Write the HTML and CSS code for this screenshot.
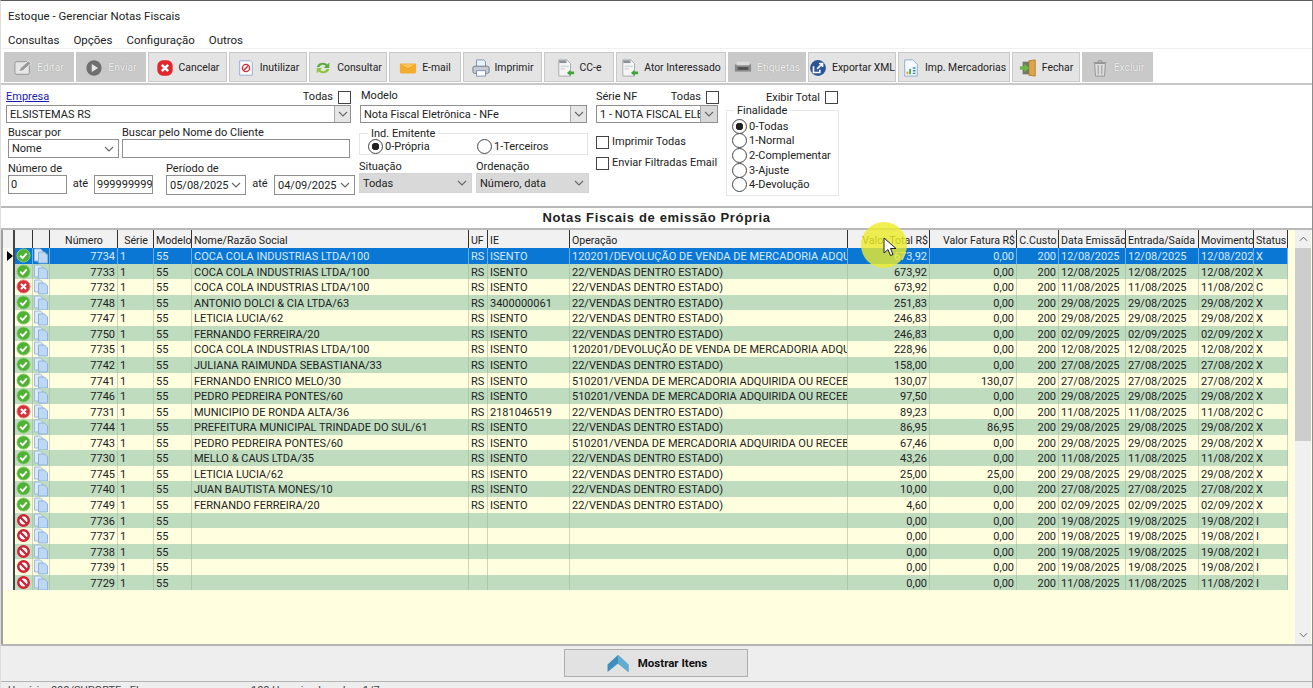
FILE: index.html
```html
<!DOCTYPE html>
<html lang="pt-BR">
<head>
<meta charset="utf-8">
<title>Estoque - Gerenciar Notas Fiscais</title>
<link rel="stylesheet" href="styles.css">
</head>
<body>
<svg class="sprite" aria-hidden="true">
<symbol id="ok" viewBox="0 0 16 16"><circle cx="8" cy="8" r="7" fill="#4fb233" stroke="#8fcf7c"/><path d="M4.5 8.2l2.5 2.5 4.5-5" fill="none" stroke="#fff" stroke-width="2"/></symbol>
<symbol id="err" viewBox="0 0 16 16"><circle cx="8" cy="8" r="7" fill="#d8303a" stroke="#e98a8a"/><path d="M5.3 5.3l5.4 5.4M10.7 5.3l-5.4 5.4" stroke="#fff" stroke-width="2.2"/></symbol>
<symbol id="ban" viewBox="0 0 16 16"><circle cx="8" cy="8" r="5.6" fill="#fff" stroke="#cf2233" stroke-width="2.6"/><path d="M4 4l8 8" stroke="#cf2233" stroke-width="2.4"/></symbol>
<symbol id="doc" viewBox="0 0 16 16"><path d="M1.5 1h6l2 2v10h-8z" fill="#dce9f7" stroke="#9dbbdc"/><path d="M5.500 4h6l3 3v8h-9z" fill="#bcd8f4" stroke="#8fb2da"/></symbol>
<symbol id="file" viewBox="0 0 20 20"><path d="M2 1h9l4 4v14H2z" fill="#f4f4f4" stroke="#a4a8ae"/><path d="M2.500 1.500h8v3h-8z" fill="#8d9196"/><path d="M4 8h9M4 11h5" stroke="#c0c4c9"/><path d="M11 15.500l4-3.500v2h4v3h-4v2z" fill="#3fa33a"/></symbol>
<symbol id="i-edit" viewBox="0 0 20 20"><rect x="1" y="3" width="16" height="14" rx="2" fill="#e6e6e6" stroke="#8e8e8e"/><path d="M5 14l2-4 9-8 3 3-9 8z" fill="#9a9a9a" stroke="#f2f2f2"/></symbol>
<symbol id="i-send" viewBox="0 0 20 20"><circle cx="10" cy="10" r="8.500" fill="#6f6f6f"/><path d="M7.500 5.500l7 4.500-7 4.500z" fill="#e6e6e6"/></symbol>
<symbol id="i-cancel" viewBox="0 0 20 20"><rect x="1.500" y="1.500" width="17" height="17" rx="6" fill="#e2262c"/><path d="M6.500 6.500l7 7M13.500 6.500l-7 7" stroke="#fff" stroke-width="2.800"/></symbol>
<symbol id="i-inut" viewBox="0 0 20 20"><path d="M3 2h12l2 2v14H3z" fill="#fbfbfb" stroke="#8ea9cf"/><circle cx="10" cy="10" r="4" fill="none" stroke="#c9303a" stroke-width="1.500"/><path d="M7.500 12.500l5-5" stroke="#c9303a" stroke-width="1.500"/></symbol>
<symbol id="i-cons" viewBox="0 0 20 20"><path d="M3 9a7 6 0 0 1 12-3l2-2v6h-6l2-2a4 4 0 0 0-7 1z" fill="#59ad3a"/><path d="M17 11a7 6 0 0 1-12 3l-2 2v-6h6l-2 2a4 4 0 0 0 7-1z" fill="#8cc63f"/></symbol>
<symbol id="i-mail" viewBox="0 0 20 20"><rect x="1" y="5" width="18" height="11" rx="1.500" fill="#f5ac2f"/><path d="M1.500 6l8.500 5 8.500-5" fill="#ffc860" stroke="#eb9c20"/></symbol>
<symbol id="i-print" viewBox="0 0 20 20"><path d="M5 1h8l2 2v6H5z" fill="#e9f1fb" stroke="#7a8fb0"/><rect x="1" y="8" width="18" height="8" rx="2" fill="#c6cbd3" stroke="#6d7582"/><rect x="5" y="13" width="10" height="6" fill="#fff" stroke="#7a8fb0"/></symbol>
<symbol id="i-label" viewBox="0 0 20 20"><rect x="1" y="6" width="18" height="8" fill="#8a8a8a"/><rect x="3" y="3" width="14" height="4" fill="#dcdcdc"/><rect x="4" y="9" width="12" height="3" fill="#505050"/></symbol>
<symbol id="i-xml" viewBox="0 0 20 20"><circle cx="10" cy="10" r="8.800" fill="#2b5597"/><path d="M5 8v7h7v-3M9 11l6-6M11 5h4v4" fill="none" stroke="#fff" stroke-width="1.800"/></symbol>
<symbol id="i-merc" viewBox="0 0 20 20"><path d="M3 1h9l5 5v13H3z" fill="#f5f9fd" stroke="#86a9cf"/><rect x="5" y="14" width="2" height="3" fill="#e39a2c"/><rect x="8" y="11" width="2" height="6" fill="#4aa64a"/><path d="M12 10h3M12 13h3M12 16h3" stroke="#3b84c9" stroke-width="1.500"/></symbol>
<symbol id="i-exit" viewBox="0 0 20 20"><path d="M11 2l7-1v18l-7-1z" fill="#e0a347" stroke="#b07c24"/><rect x="4" y="3" width="7" height="14" fill="#6d7a60"/><path d="M1 8h5V5l5 5-5 5v-3H1z" fill="#6cb548"/></symbol>
<symbol id="i-trash" viewBox="0 0 20 20"><path d="M4 5h12l-1 14H5z" fill="#dcdcdc" stroke="#8f8f8f"/><path d="M3 4h14M8 4V2h4v2M8 7v10M12 7v10" fill="none" stroke="#8f8f8f"/></symbol>
<symbol id="chev" viewBox="0 0 10 6"><path d="M1 1l4 4 4-4" fill="none" stroke="#666" stroke-width="1.100"/></symbol>
</svg>
<div class="window">
  <div class="titlebar">Estoque - Gerenciar Notas Fiscais</div>
  <nav class="menu"><span>Consultas</span><span>Opções</span><span>Configuração</span><span>Outros</span></nav>
  <div class="toolbar">
    <button class="tb off w1"><svg class="ic"><use href="#i-edit"/></svg>Editar</button>
    <button class="tb off w2"><svg class="ic"><use href="#i-send"/></svg>Enviar</button>
    <button class="tb w3"><svg class="ic"><use href="#i-cancel"/></svg>Cancelar</button>
    <button class="tb w4"><svg class="ic"><use href="#i-inut"/></svg>Inutilizar</button>
    <button class="tb w5"><svg class="ic"><use href="#i-cons"/></svg>Consultar</button>
    <button class="tb w6"><svg class="ic"><use href="#i-mail"/></svg>E-mail</button>
    <button class="tb w7"><svg class="ic"><use href="#i-print"/></svg>Imprimir</button>
    <button class="tb w8"><svg class="ic"><use href="#file"/></svg>CC-e</button>
    <button class="tb w9"><svg class="ic"><use href="#file"/></svg>Ator Interessado</button>
    <button class="tb off w10"><svg class="ic"><use href="#i-label"/></svg>Etiquetas</button>
    <button class="tb w11"><svg class="ic"><use href="#i-xml"/></svg>Exportar XML</button>
    <button class="tb w12"><svg class="ic"><use href="#i-merc"/></svg>Imp. Mercadorias</button>
    <button class="tb w13"><svg class="ic"><use href="#i-exit"/></svg>Fechar</button>
    <button class="tb off w14"><svg class="ic"><use href="#i-trash"/></svg>Excluir</button>
  </div>
  <form class="filters">
    <div class="col col1">
      <div class="lblrow lr-emp"><a class="link">Empresa</a><span class="todas">Todas<i class="chk"></i></span></div>
      <div class="combo c-emp"><span>ELSISTEMAS RS</span><b class="drop"><svg><use href="#chev"/></svg></b></div>
      <div class="row2 r-busca">
        <div class="fld f-por"><label>Buscar por</label><div class="combo flat"><span>Nome</span><svg class="chev"><use href="#chev"/></svg></div></div>
        <div class="fld f-nome"><label>Buscar pelo Nome do Cliente</label><div class="input"></div></div>
      </div>
      <div class="row2 r-num">
        <div class="fld f-num"><label>Número de</label><div class="input"><span>0</span></div></div>
        <span class="ate a1">até</span>
        <div class="fld f-num2"><div class="input"><span>999999999</span></div></div>
        <div class="fld f-per"><label>Período de</label><div class="combo flat"><span>05/08/2025</span><svg class="chev"><use href="#chev"/></svg></div></div>
        <span class="ate a2">até</span>
        <div class="fld f-per2"><div class="combo flat"><span>04/09/2025</span><svg class="chev"><use href="#chev"/></svg></div></div>
      </div>
    </div>
    <div class="col col2">
      <label class="lbl-mod">Modelo</label>
      <div class="combo c-mod"><span>Nota Fiscal Eletrônica - NFe</span><b class="drop"><svg><use href="#chev"/></svg></b></div>
      <fieldset class="group g-ind"><legend>Ind. Emitente</legend>
        <span class="radio on">0-Própria</span><span class="radio">1-Terceiros</span>
      </fieldset>
      <div class="row2 r-sit">
        <div class="fld f-sit"><label>Situação</label><div class="combo grey"><span>Todas</span><svg class="chev"><use href="#chev"/></svg></div></div>
        <div class="fld f-ord"><label>Ordenação</label><div class="combo grey"><span>Número, data</span><svg class="chev"><use href="#chev"/></svg></div></div>
      </div>
    </div>
    <div class="col col3">
      <div class="lblrow"><span>Série NF</span><span class="todas">Todas<i class="chk"></i></span></div>
      <div class="combo c-serie"><span>1 - NOTA FISCAL ELE</span><b class="drop grey-drop"><svg><use href="#chev"/></svg></b></div>
      <div class="opt o1"><i class="chk"></i>Imprimir Todas</div>
      <div class="opt o2"><i class="chk"></i>Enviar Filtradas Email</div>
    </div>
    <div class="col col4">
      <div class="lbl-total">Exibir Total<i class="chk"></i></div>
      <fieldset class="group g-fin"><legend>Finalidade</legend>
        <span class="radio on">0-Todas</span><span class="radio">1-Normal</span><span class="radio">2-Complementar</span><span class="radio">3-Ajuste</span><span class="radio">4-Devolução</span>
      </fieldset>
    </div>
  </form>
  <h1 class="grid-title">Notas Fiscais de emissão Própria</h1>
  <div class="gridwrap">
    <div class="grid">
      <div class="gr head"><span class="c0"></span><span class="c1"></span><span class="c2"></span><span class="c3 ctr">Número</span><span class="c4 ctr">Série</span><span class="c5 ctr">Modelo</span><span class="c6">Nome/Razão Social</span><span class="c7">UF</span><span class="c8">IE</span><span class="c9">Operação</span><span class="c10 rt">Valor Total R$</span><span class="c11 rt">Valor Fatura R$</span><span class="c12 ctr">C.Custo</span><span class="c13">Data Emissão</span><span class="c14">Entrada/Saída</span><span class="c15">Movimento</span><span class="c16">Status</span></div>
      <div class="gr sel"><span class="c0"><i class="ptr"></i></span><span class="c1"><svg><use href="#ok"/></svg></span><span class="c2"><svg><use href="#doc"/></svg></span><span class="c3 rt">7734</span><span class="c4">1</span><span class="c5">55</span><span class="c6">COCA COLA INDUSTRIAS LTDA/100</span><span class="c7">RS</span><span class="c8">ISENTO</span><span class="c9">120201/DEVOLUÇÃO DE VENDA DE MERCADORIA ADQUIRIDA OU RECEBIDA</span><span class="c10 rt">673,92</span><span class="c11 rt">0,00</span><span class="c12 rt">200</span><span class="c13">12/08/2025</span><span class="c14">12/08/2025</span><span class="c15">12/08/2025</span><span class="c16">X</span></div>
      <div class="gr g"><span class="c0"></span><span class="c1"><svg><use href="#ok"/></svg></span><span class="c2"><svg><use href="#doc"/></svg></span><span class="c3 rt">7733</span><span class="c4">1</span><span class="c5">55</span><span class="c6">COCA COLA INDUSTRIAS LTDA/100</span><span class="c7">RS</span><span class="c8">ISENTO</span><span class="c9">22/VENDAS DENTRO ESTADO)</span><span class="c10 rt">673,92</span><span class="c11 rt">0,00</span><span class="c12 rt">200</span><span class="c13">12/08/2025</span><span class="c14">12/08/2025</span><span class="c15">12/08/2025</span><span class="c16">X</span></div>
      <div class="gr"><span class="c0"></span><span class="c1"><svg><use href="#err"/></svg></span><span class="c2"><svg><use href="#doc"/></svg></span><span class="c3 rt">7732</span><span class="c4">1</span><span class="c5">55</span><span class="c6">COCA COLA INDUSTRIAS LTDA/100</span><span class="c7">RS</span><span class="c8">ISENTO</span><span class="c9">22/VENDAS DENTRO ESTADO)</span><span class="c10 rt">673,92</span><span class="c11 rt">0,00</span><span class="c12 rt">200</span><span class="c13">11/08/2025</span><span class="c14">11/08/2025</span><span class="c15">11/08/2025</span><span class="c16">C</span></div>
      <div class="gr g"><span class="c0"></span><span class="c1"><svg><use href="#ok"/></svg></span><span class="c2"><svg><use href="#doc"/></svg></span><span class="c3 rt">7748</span><span class="c4">1</span><span class="c5">55</span><span class="c6">ANTONIO DOLCI &amp; CIA LTDA/63</span><span class="c7">RS</span><span class="c8">3400000061</span><span class="c9">22/VENDAS DENTRO ESTADO)</span><span class="c10 rt">251,83</span><span class="c11 rt">0,00</span><span class="c12 rt">200</span><span class="c13">29/08/2025</span><span class="c14">29/08/2025</span><span class="c15">29/08/2025</span><span class="c16">X</span></div>
      <div class="gr"><span class="c0"></span><span class="c1"><svg><use href="#ok"/></svg></span><span class="c2"><svg><use href="#doc"/></svg></span><span class="c3 rt">7747</span><span class="c4">1</span><span class="c5">55</span><span class="c6">LETICIA LUCIA/62</span><span class="c7">RS</span><span class="c8">ISENTO</span><span class="c9">22/VENDAS DENTRO ESTADO)</span><span class="c10 rt">246,83</span><span class="c11 rt">0,00</span><span class="c12 rt">200</span><span class="c13">29/08/2025</span><span class="c14">29/08/2025</span><span class="c15">29/08/2025</span><span class="c16">X</span></div>
      <div class="gr g"><span class="c0"></span><span class="c1"><svg><use href="#ok"/></svg></span><span class="c2"><svg><use href="#doc"/></svg></span><span class="c3 rt">7750</span><span class="c4">1</span><span class="c5">55</span><span class="c6">FERNANDO FERREIRA/20</span><span class="c7">RS</span><span class="c8">ISENTO</span><span class="c9">22/VENDAS DENTRO ESTADO)</span><span class="c10 rt">246,83</span><span class="c11 rt">0,00</span><span class="c12 rt">200</span><span class="c13">02/09/2025</span><span class="c14">02/09/2025</span><span class="c15">02/09/2025</span><span class="c16">X</span></div>
      <div class="gr"><span class="c0"></span><span class="c1"><svg><use href="#ok"/></svg></span><span class="c2"><svg><use href="#doc"/></svg></span><span class="c3 rt">7735</span><span class="c4">1</span><span class="c5">55</span><span class="c6">COCA COLA INDUSTRIAS LTDA/100</span><span class="c7">RS</span><span class="c8">ISENTO</span><span class="c9">120201/DEVOLUÇÃO DE VENDA DE MERCADORIA ADQUIRIDA OU RECEBIDA</span><span class="c10 rt">228,96</span><span class="c11 rt">0,00</span><span class="c12 rt">200</span><span class="c13">12/08/2025</span><span class="c14">12/08/2025</span><span class="c15">12/08/2025</span><span class="c16">X</span></div>
      <div class="gr g"><span class="c0"></span><span class="c1"><svg><use href="#ok"/></svg></span><span class="c2"><svg><use href="#doc"/></svg></span><span class="c3 rt">7742</span><span class="c4">1</span><span class="c5">55</span><span class="c6">JULIANA RAIMUNDA SEBASTIANA/33</span><span class="c7">RS</span><span class="c8">ISENTO</span><span class="c9">22/VENDAS DENTRO ESTADO)</span><span class="c10 rt">158,00</span><span class="c11 rt">0,00</span><span class="c12 rt">200</span><span class="c13">27/08/2025</span><span class="c14">27/08/2025</span><span class="c15">27/08/2025</span><span class="c16">X</span></div>
      <div class="gr"><span class="c0"></span><span class="c1"><svg><use href="#ok"/></svg></span><span class="c2"><svg><use href="#doc"/></svg></span><span class="c3 rt">7741</span><span class="c4">1</span><span class="c5">55</span><span class="c6">FERNANDO ENRICO MELO/30</span><span class="c7">RS</span><span class="c8">ISENTO</span><span class="c9">510201/VENDA DE MERCADORIA ADQUIRIDA OU RECEBIDA</span><span class="c10 rt">130,07</span><span class="c11 rt">130,07</span><span class="c12 rt">200</span><span class="c13">27/08/2025</span><span class="c14">27/08/2025</span><span class="c15">27/08/2025</span><span class="c16">X</span></div>
      <div class="gr g"><span class="c0"></span><span class="c1"><svg><use href="#ok"/></svg></span><span class="c2"><svg><use href="#doc"/></svg></span><span class="c3 rt">7746</span><span class="c4">1</span><span class="c5">55</span><span class="c6">PEDRO PEDREIRA PONTES/60</span><span class="c7">RS</span><span class="c8">ISENTO</span><span class="c9">510201/VENDA DE MERCADORIA ADQUIRIDA OU RECEBIDA</span><span class="c10 rt">97,50</span><span class="c11 rt">0,00</span><span class="c12 rt">200</span><span class="c13">29/08/2025</span><span class="c14">29/08/2025</span><span class="c15">29/08/2025</span><span class="c16">X</span></div>
      <div class="gr"><span class="c0"></span><span class="c1"><svg><use href="#err"/></svg></span><span class="c2"><svg><use href="#doc"/></svg></span><span class="c3 rt">7731</span><span class="c4">1</span><span class="c5">55</span><span class="c6">MUNICIPIO DE RONDA ALTA/36</span><span class="c7">RS</span><span class="c8">2181046519</span><span class="c9">22/VENDAS DENTRO ESTADO)</span><span class="c10 rt">89,23</span><span class="c11 rt">0,00</span><span class="c12 rt">200</span><span class="c13">11/08/2025</span><span class="c14">11/08/2025</span><span class="c15">11/08/2025</span><span class="c16">C</span></div>
      <div class="gr g"><span class="c0"></span><span class="c1"><svg><use href="#ok"/></svg></span><span class="c2"><svg><use href="#doc"/></svg></span><span class="c3 rt">7744</span><span class="c4">1</span><span class="c5">55</span><span class="c6">PREFEITURA MUNICIPAL TRINDADE DO SUL/61</span><span class="c7">RS</span><span class="c8">ISENTO</span><span class="c9">22/VENDAS DENTRO ESTADO)</span><span class="c10 rt">86,95</span><span class="c11 rt">86,95</span><span class="c12 rt">200</span><span class="c13">29/08/2025</span><span class="c14">29/08/2025</span><span class="c15">29/08/2025</span><span class="c16">X</span></div>
      <div class="gr"><span class="c0"></span><span class="c1"><svg><use href="#ok"/></svg></span><span class="c2"><svg><use href="#doc"/></svg></span><span class="c3 rt">7743</span><span class="c4">1</span><span class="c5">55</span><span class="c6">PEDRO PEDREIRA PONTES/60</span><span class="c7">RS</span><span class="c8">ISENTO</span><span class="c9">510201/VENDA DE MERCADORIA ADQUIRIDA OU RECEBIDA</span><span class="c10 rt">67,46</span><span class="c11 rt">0,00</span><span class="c12 rt">200</span><span class="c13">29/08/2025</span><span class="c14">29/08/2025</span><span class="c15">29/08/2025</span><span class="c16">X</span></div>
      <div class="gr g"><span class="c0"></span><span class="c1"><svg><use href="#ok"/></svg></span><span class="c2"><svg><use href="#doc"/></svg></span><span class="c3 rt">7730</span><span class="c4">1</span><span class="c5">55</span><span class="c6">MELLO &amp; CAUS LTDA/35</span><span class="c7">RS</span><span class="c8">ISENTO</span><span class="c9">22/VENDAS DENTRO ESTADO)</span><span class="c10 rt">43,26</span><span class="c11 rt">0,00</span><span class="c12 rt">200</span><span class="c13">11/08/2025</span><span class="c14">11/08/2025</span><span class="c15">11/08/2025</span><span class="c16">X</span></div>
      <div class="gr"><span class="c0"></span><span class="c1"><svg><use href="#ok"/></svg></span><span class="c2"><svg><use href="#doc"/></svg></span><span class="c3 rt">7745</span><span class="c4">1</span><span class="c5">55</span><span class="c6">LETICIA LUCIA/62</span><span class="c7">RS</span><span class="c8">ISENTO</span><span class="c9">22/VENDAS DENTRO ESTADO)</span><span class="c10 rt">25,00</span><span class="c11 rt">25,00</span><span class="c12 rt">200</span><span class="c13">29/08/2025</span><span class="c14">29/08/2025</span><span class="c15">29/08/2025</span><span class="c16">X</span></div>
      <div class="gr g"><span class="c0"></span><span class="c1"><svg><use href="#ok"/></svg></span><span class="c2"><svg><use href="#doc"/></svg></span><span class="c3 rt">7740</span><span class="c4">1</span><span class="c5">55</span><span class="c6">JUAN BAUTISTA MONES/10</span><span class="c7">RS</span><span class="c8">ISENTO</span><span class="c9">22/VENDAS DENTRO ESTADO)</span><span class="c10 rt">10,00</span><span class="c11 rt">0,00</span><span class="c12 rt">200</span><span class="c13">27/08/2025</span><span class="c14">27/08/2025</span><span class="c15">27/08/2025</span><span class="c16">X</span></div>
      <div class="gr"><span class="c0"></span><span class="c1"><svg><use href="#ok"/></svg></span><span class="c2"><svg><use href="#doc"/></svg></span><span class="c3 rt">7749</span><span class="c4">1</span><span class="c5">55</span><span class="c6">FERNANDO FERREIRA/20</span><span class="c7">RS</span><span class="c8">ISENTO</span><span class="c9">22/VENDAS DENTRO ESTADO)</span><span class="c10 rt">4,60</span><span class="c11 rt">0,00</span><span class="c12 rt">200</span><span class="c13">02/09/2025</span><span class="c14">02/09/2025</span><span class="c15">02/09/2025</span><span class="c16">X</span></div>
      <div class="gr g"><span class="c0"></span><span class="c1"><svg><use href="#ban"/></svg></span><span class="c2"><svg><use href="#doc"/></svg></span><span class="c3 rt">7736</span><span class="c4">1</span><span class="c5">55</span><span class="c6"></span><span class="c7"></span><span class="c8"></span><span class="c9"></span><span class="c10 rt">0,00</span><span class="c11 rt">0,00</span><span class="c12 rt">200</span><span class="c13">19/08/2025</span><span class="c14">19/08/2025</span><span class="c15">19/08/2025</span><span class="c16">I</span></div>
      <div class="gr"><span class="c0"></span><span class="c1"><svg><use href="#ban"/></svg></span><span class="c2"><svg><use href="#doc"/></svg></span><span class="c3 rt">7737</span><span class="c4">1</span><span class="c5">55</span><span class="c6"></span><span class="c7"></span><span class="c8"></span><span class="c9"></span><span class="c10 rt">0,00</span><span class="c11 rt">0,00</span><span class="c12 rt">200</span><span class="c13">19/08/2025</span><span class="c14">19/08/2025</span><span class="c15">19/08/2025</span><span class="c16">I</span></div>
      <div class="gr g"><span class="c0"></span><span class="c1"><svg><use href="#ban"/></svg></span><span class="c2"><svg><use href="#doc"/></svg></span><span class="c3 rt">7738</span><span class="c4">1</span><span class="c5">55</span><span class="c6"></span><span class="c7"></span><span class="c8"></span><span class="c9"></span><span class="c10 rt">0,00</span><span class="c11 rt">0,00</span><span class="c12 rt">200</span><span class="c13">19/08/2025</span><span class="c14">19/08/2025</span><span class="c15">19/08/2025</span><span class="c16">I</span></div>
      <div class="gr"><span class="c0"></span><span class="c1"><svg><use href="#ban"/></svg></span><span class="c2"><svg><use href="#doc"/></svg></span><span class="c3 rt">7739</span><span class="c4">1</span><span class="c5">55</span><span class="c6"></span><span class="c7"></span><span class="c8"></span><span class="c9"></span><span class="c10 rt">0,00</span><span class="c11 rt">0,00</span><span class="c12 rt">200</span><span class="c13">19/08/2025</span><span class="c14">19/08/2025</span><span class="c15">19/08/2025</span><span class="c16">I</span></div>
      <div class="gr g"><span class="c0"></span><span class="c1"><svg><use href="#ban"/></svg></span><span class="c2"><svg><use href="#doc"/></svg></span><span class="c3 rt">7729</span><span class="c4">1</span><span class="c5">55</span><span class="c6"></span><span class="c7"></span><span class="c8"></span><span class="c9"></span><span class="c10 rt">0,00</span><span class="c11 rt">0,00</span><span class="c12 rt">200</span><span class="c13">11/08/2025</span><span class="c14">11/08/2025</span><span class="c15">11/08/2025</span><span class="c16">I</span></div>
    </div>
    <div class="scroll">
      <svg class="sc-up"><use href="#chev"/></svg>
      <div class="thumb"></div>
      <svg class="sc-dn"><use href="#chev"/></svg>
    </div>
  </div>
  <div class="footer">
    <button class="show"><svg class="show-ic" viewBox="0 0 24 20"><path d="M12 1l11 10v8L12 10 1 19v-8z" fill="#3f8fbd"/><path d="M12 1l11 10v8L12 10z" fill="#62acd0"/></svg>Mostrar Itens</button>
  </div>
  <div class="status"><span class="st1">Usuário: 000/SUPORTE - Ele</span><span class="st2">100 Usuarios logados: 1/7</span></div>
</div>
<div class="halo"></div>
<svg class="cursor" viewBox="0 0 14 20"><path d="M1 1v15l4-3.500 2.500 6 2.500-1-2.500-6H13z" fill="#fff" stroke="#222"/></svg>
</body>
</html>
```
FILE: styles.css
```css
* { box-sizing: border-box; }
html, body { margin: 0; height: 688px; overflow: hidden; background: #fff; }
body { font-family: Roboto, "Liberation Sans", Arial, sans-serif; font-size: 11px; color: #222; position: relative; }
.sprite { display: none; }
.window { width: 1313px; height: 688px; border-top: 1px solid #5c5c5c; border-right: 1px solid #8c8c8c; border-left: 1px solid #ddd; display: flex; flex-direction: column; overflow: hidden; }
.titlebar { height: 29px; padding: 8px 0 0 7px; font-size: 11.5px; line-height: 14px; }
.menu { height: 19px; display: flex; padding: 3px 0 0 7px; gap: 14px; font-size: 11.5px; line-height: 14px; border-bottom: 1px solid #f0f0f0; }
.toolbar { height: 36px; padding: 3px 0 0 3px; display: flex; gap: 2px; border-bottom: 2px solid #c8c8c8; flex: none; }
.tb { height: 30px; padding: 1px 0 0; display: flex; align-items: center; justify-content: center; gap: 5px; border: 1px solid #c9c9c9; background: #e4e4e4; font: 10.4px Roboto, "Liberation Sans", Arial, sans-serif; color: #222; white-space: nowrap; }
.tb.off { background: #c9c9c9; color: #f0f0f0; text-shadow: 0 0 1px #8f8f8f; border-color: #c9c9c9; }
.ic { width: 18px; height: 18px; flex: none; }
.w1 { width: 70px; } .w2 { width: 70px; } .w3 { width: 79px; } .w4 { width: 78px; } .w5 { width: 78px; } .w6 { width: 72px; }
.w7 { width: 79px; } .w8 { width: 70px; } .w9 { width: 110px; } .w10 { width: 78px; } .w11 { width: 88px; } .w12 { width: 112px; } .w13 { width: 68px; } .w14 { width: 71px; }
.filters { height: 121px; display: flex; padding-left: 5px; flex: none; }
.col { display: flex; flex-direction: column; flex: none; }
.col1 { width: 349px; }
.col2 { width: 236px; margin-left: 4px; }
.col3 { width: 123px; margin-left: 1px; }
.col4 { width: 114px; margin-left: 7px; }
label { display: block; line-height: 14px; }
.fld label { height: 14px; line-height: 16px; white-space: nowrap; }
.lblrow { display: flex; justify-content: space-between; align-items: center; height: 20px; padding-top: 4px; line-height: 14px; }
.lr-emp { width: 345px; }
.link { color: #1a1ab0; text-decoration: underline; }
.todas { display: flex; align-items: center; gap: 5px; }
.chk { display: inline-block; width: 13px; height: 13px; border: 1px solid #444; background: #fff; flex: none; }
.combo { display: flex; align-items: center; height: 18px; background: #fff; border: 1px solid #8f8f8f; overflow: hidden; white-space: nowrap; position: relative; }
.combo > span { padding-left: 3px; flex: 1; overflow: hidden; }
.drop { width: 16px; height: 16px; background: #e6e6e6; border-left: 1px solid #a8a8a8; display: flex; align-items: center; justify-content: center; flex: none; }
.drop svg { width: 10px; height: 6px; }
.chev { width: 10px; height: 6px; margin-right: 4px; flex: none; }
.flat { height: 20px; border-color: #8f8f8f; }
.grey { height: 20px; background: #d9d9d9; border: 1px solid #d4d4d4; }
.c-emp { width: 345px; }
.row2 { display: flex; }
.r-busca { margin-top: 2px; }
.f-por { width: 111px; margin-left: 2px; }
.f-por .flat { height: 19px; }
.f-nome { width: 228px; margin-left: 3px; }
.input { height: 19px; border: 1px solid #8f8f8f; background: #fff; display: flex; align-items: center; padding-left: 2px; overflow: hidden; white-space: nowrap; }
.r-num { margin-top: 3px; align-items: flex-end; }
.r-num .input { margin-bottom: 1px; }
.f-num { width: 59px; margin-left: 2px; }
.ate { text-align: center; line-height: 17px; padding-bottom: 3px; }
.a1 { width: 27px; }
.f-num2 { width: 59px; }
.f-per { width: 80px; margin-left: 13px; }
.a2 { width: 28px; }
.f-per2 { width: 81px; }
.lbl-mod { height: 20px; padding: 4px 0 0 2px; }
.c-mod { width: 227px; margin-left: 1px; }
.group { margin: 0; padding: 0; border: 1px solid #e6e6e6; }
.group legend { padding: 0 3px; line-height: 13px; }
.g-ind { height: 28px; width: 229px; margin: 4px 0 0; display: flex; padding: 0 0 0 8px; }
.radio { display: flex; align-items: center; gap: 2px; height: 14.6px; white-space: nowrap; }
.radio::before { content: ""; width: 13px; height: 13px; border: 1px solid #444; border-radius: 50%; background: #fff; flex: none; }
.radio.on::before { background: radial-gradient(circle, #222 0 3.500px, #fff 4px); }
.g-ind .on { width: 109px; }
.g-ind .radio { margin-top: -1px; }
.r-sit { margin-top: 4px; gap: 4px; }
.f-sit { width: 113px; }
.f-ord { width: 113px; }
.c-serie { width: 122px; }
.grey-drop { width: 17px; background: #d8d8d8; }
.opt { display: flex; align-items: center; gap: 3px; line-height: 14px; white-space: nowrap; }
.o1 { margin-top: 12px; }
.o2 { margin-top: 7px; }
.lbl-total { height: 20px; padding-top: 4px; display: flex; justify-content: flex-end; gap: 5px; align-items: center; padding-right: 2px; }
.g-fin { width: 113px; height: 92px; margin-top: -1px; padding: 2px 0 0 5px; display: flex; flex-direction: column; }
.g-fin legend { margin-left: 2px; }
.grid-title { margin: 0; height: 24px; flex: none; border-top: 2px solid #b9b9b9; border-bottom: 2px solid #b9b9b9; font: bold 13px/20px "Liberation Sans", Arial, sans-serif; text-align: center; letter-spacing: .65px; color: #222; }
.gridwrap { height: 414px; flex: none; display: flex; background: #ffffdf; border-left: 2px solid #a0a0a0; }
.grid { width: 1291px; flex: none; }
.gr { display: grid; grid-template-columns: 12px 18px 17px 68px 36px 38px 277px 19px 82px 278px 82px 87px 42px 67px 73px 55px 34px; height: 15.57px; background: #ffffdf; align-items: stretch; width: 1285px; }
.gr > span { display: block; overflow: hidden; white-space: nowrap; padding: 0 2px; line-height: 17px; border-right: 1px solid #d3d3bb; color: #222; }
.gr svg { width: 15px; height: 15px; display: block; margin: 0 auto; }
.gr > .c2 svg { width: 16px; height: 16px; }
.gr > .c1, .gr > .c2 { padding: 0; }
.gr > .c0 { padding: 0; background: #fbfbf3; border-right: 2px solid #444; display: flex; align-items: center; }
.ptr { width: 0; height: 0; border-left: 6px solid #000; border-top: 5px solid transparent; border-bottom: 5px solid transparent; margin-left: 4px; }
.rt { text-align: right; }
.ctr { text-align: center; }
.g { background: #bfdcbf; }
.g > span { border-right-color: #aac8aa; }
.sel { background: #0a77d4; }
.sel > span { color: #d8ecff; border-right-color: #6aaee6; }
.gr.head { height: 18px; background: #f1f1f1; font-size: 10.6px; }
.gr.head > span { line-height: 21px; border-right: 1px solid #333; background: #f1f1f1; padding: 0 1px 0 2px; }
.gr.head > .c0 { background: #f1f1f1; border-right: 2px solid #444; }
.scroll { width: 16px; margin-left: 1px; background: #f0f0f0; display: flex; flex-direction: column; align-items: center; }
.scroll svg { width: 9px; height: 6px; flex: none; }
.sc-up { margin-top: 6px; transform: rotate(180deg); }
.thumb { width: 100%; height: 193px; margin-top: 6px; background: #cdcdcd; }
.sc-dn { margin-top: auto; margin-bottom: 6px; }
.footer { height: 38px; flex: none; background: #eee; border-top: 2px solid #b5b5b5; border-bottom: 1px solid #b5b5b5; display: flex; align-items: center; justify-content: center; padding: 0 1px 1px 0; }
.show { width: 184px; height: 28px; border: 1px solid #adadad; background: #e2e2e2; display: flex; align-items: center; justify-content: center; gap: 7px; font: bold 11.5px Roboto, "Liberation Sans", Arial, sans-serif; color: #111; padding: 0; }
.show-ic { width: 26px; height: 19px; }
.status { flex: 1; background: #eee; display: flex; padding: 2px 0 0 7px; font-size: 11px; line-height: 14px; color: #444; white-space: nowrap; overflow: hidden; }
.st1 { width: 243px; }
.halo { position: absolute; left: 861px; top: 222px; width: 46px; height: 46px; border-radius: 50%; background: rgba(238, 236, 40, .8); }
.cursor { position: absolute; left: 883px; top: 237px; width: 14px; height: 20px; }
```
